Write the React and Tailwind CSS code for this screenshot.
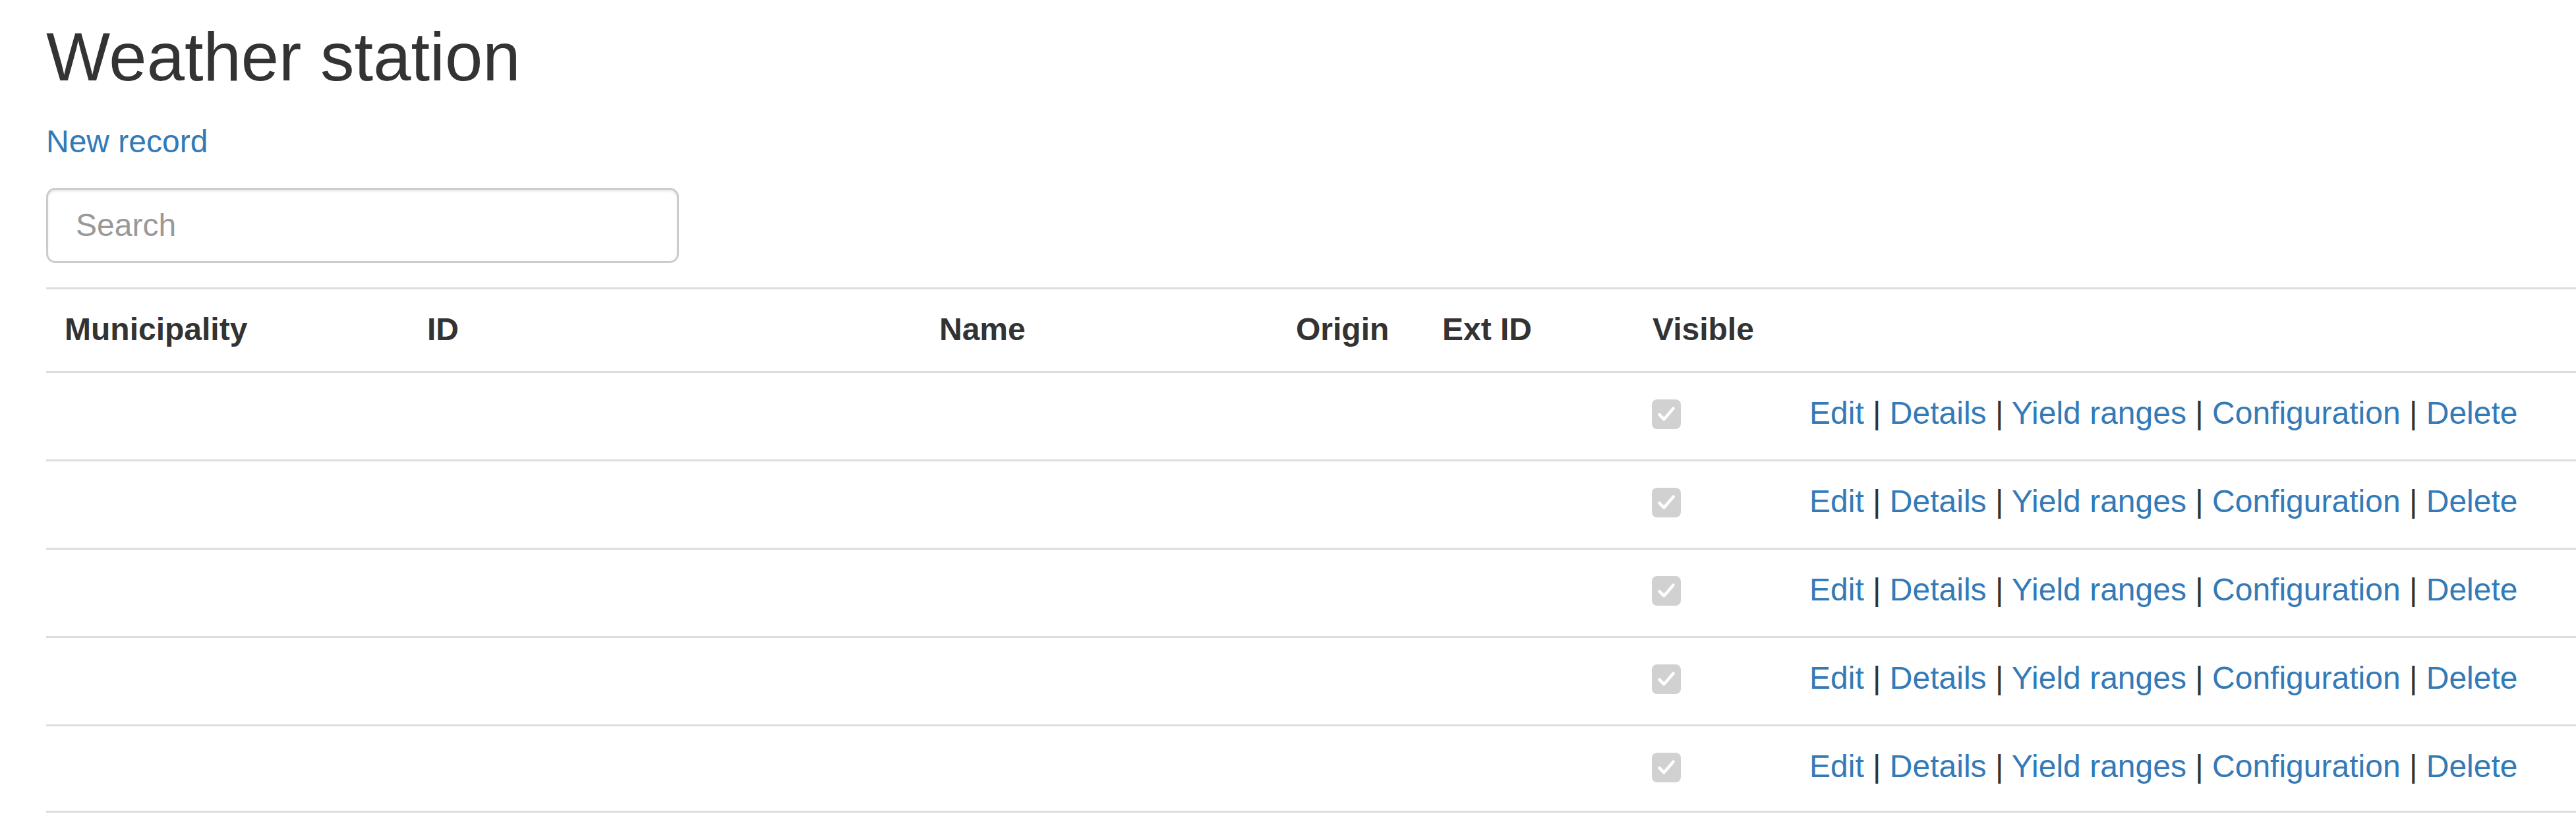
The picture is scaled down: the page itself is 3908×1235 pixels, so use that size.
import React from "react";

const cols = "grid grid-cols-[550px_777px_541px_222px_319px_238px_1fr]";

function Check() {
  return (
    <div className="mt-[40px] w-[44px] h-[45px] rounded-[8px] bg-[#d1d1d1] flex items-center justify-center">
      <svg width="36" height="36" viewBox="0 0 24 24" fill="none">
        <path d="M5 12.8l4.6 4.6L19 6.5" stroke="#ffffff" strokeWidth="3" strokeLinecap="round" strokeLinejoin="round" />
      </svg>
    </div>
  );
}

function Actions() {
  const items = ["Edit", "Details", "Yield ranges", "Configuration", "Delete"];
  return (
    <div className="pt-[26px] pl-[28px] whitespace-nowrap">
      {items.map((t, i) => (
        <React.Fragment key={t}>
          {i > 0 && <span className="text-[#333]"> | </span>}
          <a href="#" className="text-[#337ab7]">{t}</a>
        </React.Fragment>
      ))}
    </div>
  );
}

export default function App() {
  const headers = ["Municipality", "ID", "Name", "Origin", "Ext ID", "Visible", ""];
  const rows = [0, 1, 2, 3, 4];
  return (
    <div className="min-h-screen bg-white pl-[70px] pt-[29px] text-[#333] text-[48px] leading-[70px] font-['Liberation_Sans',Arial,sans-serif] overflow-hidden">
      <h2 className="text-[103px] leading-[115.5px] font-normal mb-[35px]">Weather station</h2>
      <p className="mb-[35px]">
        <a href="#" className="text-[#337ab7]">New record</a>
      </p>
      <input
        type="text"
        placeholder="Search"
        className="block w-[960px] h-[114px] border-[3px] border-[#ccc] rounded-[14px] px-[42px] text-[48px] text-[#555] placeholder:text-[#999] outline-none shadow-[inset_0_3px_3px_rgba(0,0,0,0.075)] font-['Liberation_Sans',Arial,sans-serif]"
      />
      <div className="mt-[37px]">
        <div className={`${cols} h-[127px] border-t-[3px] border-[#ddd] font-bold text-[48px]`}>
          {headers.map((h, i) => (
            <div key={i} className="pt-[26px] pl-[28px] whitespace-nowrap">{h}</div>
          ))}
        </div>
        {rows.map((r) => (
          <div key={r} className={`${cols} h-[134px] border-t-[3px] border-[#ddd] ${r === 4 ? "border-b-[3px]" : ""}`}>
            <div />
            <div />
            <div />
            <div />
            <div />
            <div className="pl-[27px]"><Check /></div>
            <Actions />
          </div>
        ))}
      </div>
    </div>
  );
}
